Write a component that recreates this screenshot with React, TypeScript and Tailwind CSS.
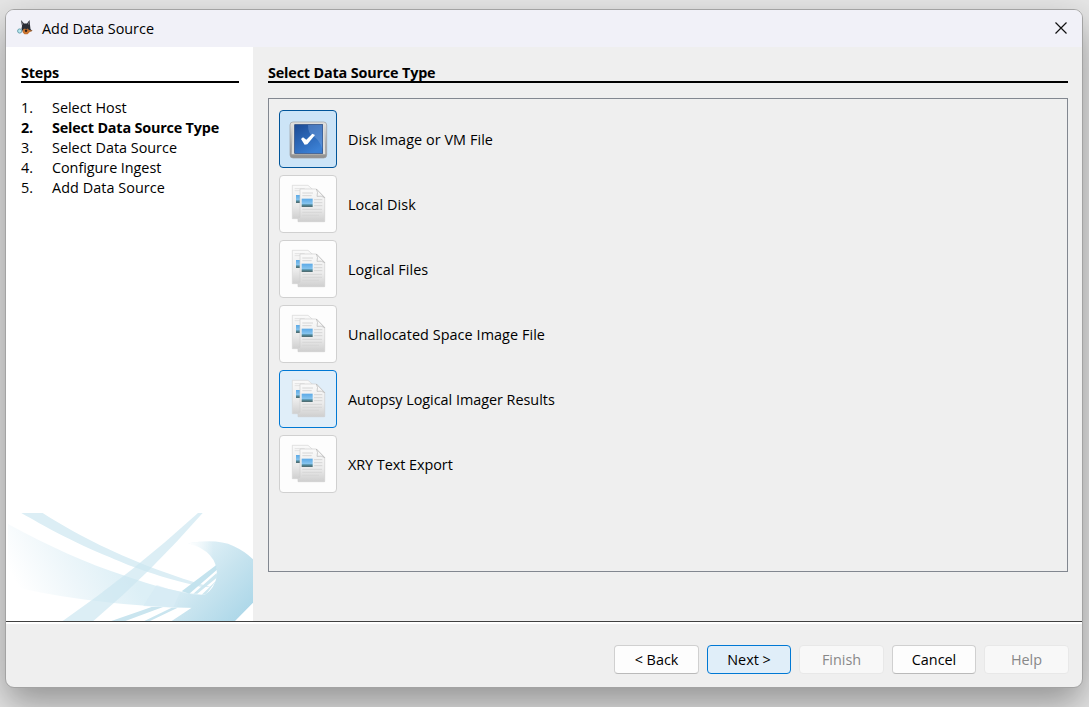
import type { ReactNode } from "react";

const steps = [
  { label: "Select Host", w: "" },
  { label: "Select Data Source Type", w: "font-bold tracking-[-0.19px]" },
  { label: "Select Data Source", w: "" },
  { label: "Configure Ingest", w: "tracking-[-0.05px]" },
  { label: "Add Data Source", w: "tracking-[0.06px]" },
];

const sources = [
  { label: "Disk Image or VM File", box: "border-[#005499] bg-[#cce4f7]", w: "tracking-[0.07px]", disk: true },
  { label: "Local Disk", box: "border-[#d0d0d0] bg-[#fdfdfd]", w: "tracking-[0.1px]" },
  { label: "Logical Files", box: "border-[#d0d0d0] bg-[#fdfdfd]", w: "tracking-[0.06px]" },
  { label: "Unallocated Space Image File", box: "border-[#d0d0d0] bg-[#fdfdfd]", w: "tracking-[0.07px]" },
  { label: "Autopsy Logical Imager Results", box: "border-[#0078d4] bg-[#e0eef9]", w: "tracking-[-0.02px]" },
  { label: "XRY Text Export", box: "border-[#d0d0d0] bg-[#fdfdfd]", w: "tracking-[-0.04px]" },
];

function DogIcon() {
  return (
    <svg className="mb-0.5 size-4 shrink-0" viewBox="0 0 16 16">
      <path d="M4 0 7 3.5h3L12.5 0l.5 5 .5 4 1.8 2-2.8.5-2 2H7L4.5 9 5 6Z" fill="#2b2d35" />
      <path d="M4.7 1.5 6.3 4 5 5.5ZM12 1.5 10.8 4l1.4 1Z" fill="#75737c" />
      <path d="M6 9.5 8 8.5l1 1 1.5-1 1.5 1.5 3.8.8-2.8 1-2.5 2.4H7.5L5.5 12Z" fill="#c9742f" />
      <path d="M7.8 9.8h2.7l-.9 2.2H8.4Z" fill="#2a1c1a" />
      <circle cx="2.7" cy="11" r="2.1" fill="#b9e8f0" stroke="#5b97a6" strokeWidth=".9" />
    </svg>
  );
}

function DiskIcon() {
  return (
    <svg className="size-14" viewBox="31 33 168 168">
      <defs>
        <linearGradient id="frame" x2="0" y2="1">
          <stop stopColor="#e4e4e2" />
          <stop offset="1" stopColor="#8f8f8e" />
        </linearGradient>
        <linearGradient id="screen" x2="0.6" y2="1">
          <stop stopColor="#1c4a94" />
          <stop offset="1" stopColor="#3b80d4" />
        </linearGradient>
      </defs>
      <rect x="61" y="66" width="110" height="108" rx="9" fill="url(#frame)" stroke="#9a9c9e" strokeWidth="2" />
      <path d="M70 69h93l4 94H66Z" fill="#dededc" />
      <rect x="75" y="74" width="84" height="86" fill="url(#screen)" stroke="#1b3e78" strokeWidth="2" />
      <path d="M115 75h43v72q-10-32-30-39-13-8-13-33Z" fill="#7ca8e2" opacity=".4" />
      <path d="m94 117 6-5 10 7 18-18 8 4-23 28-8 1Z" fill="#fff" />
    </svg>
  );
}

function DocsIcon() {
  return (
    <svg className="size-14" viewBox="30 18 168 168">
      <defs>
        <linearGradient id="paper" x2="0" y2="1">
          <stop stopColor="#fafafa" />
          <stop offset=".6" stopColor="#ebebeb" />
          <stop offset="1" stopColor="#cfcfcf" />
        </linearGradient>
        <linearGradient id="photo" x2="0" y2="1">
          <stop stopColor="#5ba9e6" />
          <stop offset=".6" stopColor="#86c4ee" />
          <stop offset=".75" stopColor="#4f8a9d" />
          <stop offset="1" stopColor="#50676a" />
        </linearGradient>
      </defs>
      <path d="M67 46h47l17 15v85H67Z" fill="url(#paper)" stroke="#d4d4d4" strokeWidth="2" />
      <path d="M74 56h30M74 62h20" stroke="#e2e2e2" strokeWidth="3" />
      <rect x="78" y="75" width="12" height="24" fill="url(#photo)" />
      <path d="M90 57h49l25 25v73H84V142h6Z" fill="url(#paper)" stroke="#cecece" strokeWidth="2" />
      <path d="M139 57q6 10 2 22 14-3 23 4Z" fill="#f7f7f7" stroke="#b5b5b5" strokeWidth="2" />
      <path d="M97 69h32M97 77h28M132 89h25M132 98h25M132 107h25M97 118h59M97 127h59M97 136h50" stroke="#d6d6d6" strokeWidth="3" />
      <rect x="95" y="86" width="33" height="25" fill="url(#photo)" />
    </svg>
  );
}

function Swoosh() {
  return (
    <svg className="mt-auto h-[108px] w-[247px] shrink-0" viewBox="18 39 741 324">
      <defs>
        <linearGradient id="sweep" gradientUnits="userSpaceOnUse" x1="60" y1="270" x2="340" y2="120">
          <stop stopColor="#fff" />
          <stop offset=".5" stopColor="#edf6fa" />
          <stop offset="1" stopColor="#dceff6" />
        </linearGradient>
        <linearGradient id="curl" gradientUnits="userSpaceOnUse" x1="570" y1="150" x2="750" y2="320">
          <stop stopColor="#e3f2f8" />
          <stop offset=".5" stopColor="#c8e4ef" />
          <stop offset="1" stopColor="#aed8e9" />
        </linearGradient>
        <linearGradient id="tip" gradientUnits="userSpaceOnUse" x1="565" y1="0" x2="640" y2="0">
          <stop stopColor="#fff" />
          <stop offset="1" stopColor="#fff" stopOpacity="0" />
        </linearGradient>
      </defs>
      <path d="M24 72C150 140 260 190 370 226 460 258 550 282 620 285L600 324C400 322 180 296 24 255Z" fill="url(#sweep)" />
      <path d="M565 130Q650 115 700 138 735 154 759 178V308L705 363H515L575 323Q540 322 520 321L540 276Q580 286 614 285 645 265 651 225 652 155 565 130Z" fill="url(#curl)" />
      <path d="M565 130Q600 122 640 122V178Q615 150 565 130Z" fill="url(#tip)" />
      <path d="M470 255Q510 270 545 277L530 323Q480 321 430 318Z" fill="#d4eaf3" opacity=".5" />
      <path d="M64 39h64C230 105 400 195 635 262L600 260C480 232 400 203 330 172 210 122 130 77 64 39Z" fill="#dceef5" />
      <path d="M594 39h14Q450 220 280 363H188Q400 216 594 39Z" fill="#cbe6f0" fillOpacity=".68" />
      <path d="m648 196-103 78 23 7 83-72Z" fill="#c4e3ee" />
      <path d="m650 219-70 62h12l60-49ZM650 241l-45 43h12Z" fill="#cde7f0" />
      <path d="M455 321h34L376 363h-42ZM515 323h18l-83 40h-17Z" fill="#cae5ef" />
    </svg>
  );
}

function Button({ children, look }: { children: ReactNode; look: string }) {
  return (
    <button className={`flex h-[29px] items-center justify-center rounded-[4px] border text-[14.4px] ${look}`}>
      {children}
    </button>
  );
}

const plain = "border-[#d0d0d0] border-b-[#bababa] bg-[#fdfdfd]";
const disabled = "border-[#e8e8e8] bg-[#f8f8f8] text-[#888]";

export default function App() {
  return (
    <div className="h-[707px] w-[1089px] overflow-hidden bg-[#e6e6e6] pt-[9px] pl-[5px] font-['Open_Sans','Noto_Sans',sans-serif] text-[14.4px] text-black">
      <div className="flex h-[679px] w-[1078px] flex-col overflow-hidden rounded-[9px] border border-[#a3a3a3] bg-[#efefef] shadow-[0_16px_36px_rgba(0,0,0,0.36)]">
        <header className="flex h-[37px] shrink-0 items-center bg-[#f1f1f8] pl-[11px]">
          <DogIcon />
          <span className="ml-[9px] leading-5">Add Data Source</span>
          <svg className="mr-[15px] mb-px ml-auto size-3" viewBox="0 0 12 12">
            <path d="m.5.5 11 11m0-11-11 11" stroke="#111" strokeWidth="1.2" />
          </svg>
        </header>
        <div className="flex h-[574px] shrink-0">
          <aside className="flex w-[247px] flex-col bg-white">
            <h2 className="mt-4 mr-[14px] ml-[15px] h-5 border-b-2 border-black leading-5 font-bold tracking-[-0.19px]">Steps</h2>
            <ol className="mt-[15px] ml-[15px]">
              {steps.map((s, i) => (
                <li key={s.label} className={`flex h-5 leading-5 ${s.w}`}>
                  <span className="w-[31px]">{i + 1}.</span>
                  <span>{s.label}</span>
                </li>
              ))}
            </ol>
            <Swoosh />
          </aside>
          <main className="flex-1 pr-[14px] pl-[15px]">
            <h2 className="mt-4 h-5 border-b-2 border-black leading-5 font-bold tracking-[-0.17px]">Select Data Source Type</h2>
            <div className="mt-[15px] flex h-[474px] flex-col gap-[7px] border border-[#828790] pt-[11px] pl-[10px]">
              {sources.map((s) => (
                <div key={s.label} className="flex items-center gap-[11px]">
                  <span className={`size-[58px] shrink-0 overflow-hidden rounded-[4px] border ${s.box}`}>
                    {s.disk ? <DiskIcon /> : <DocsIcon />}
                  </span>
                  <span className={`pt-0.5 ${s.w}`}>{s.label}</span>
                </div>
              ))}
            </div>
          </main>
        </div>
        <div className="h-[3px] shrink-0 border-t border-[#404040] bg-white" />
        <footer className="flex justify-end gap-2 pt-[21px] pr-[13px]">
          <Button look={`w-[85px] ${plain}`}>&lt; Back</Button>
          <Button look="w-[84px] border-[#0078d4] bg-[#e0eef9]">Next &gt;</Button>
          <Button look={`w-[85px] ${disabled}`}>Finish</Button>
          <Button look={`w-[84px] ${plain}`}>Cancel</Button>
          <Button look={`w-[85px] ${disabled}`}>Help</Button>
        </footer>
      </div>
    </div>
  );
}
